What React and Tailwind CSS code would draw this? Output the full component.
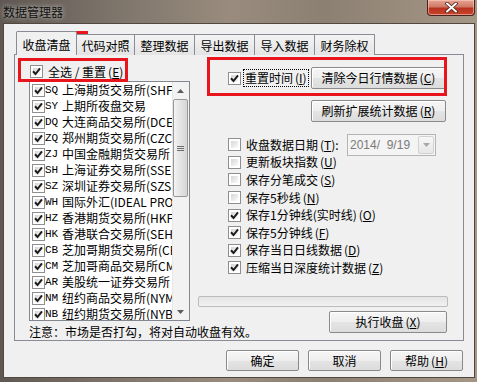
import { Fragment } from 'react'

const markets = [
  ['SQ', '上海期货交易所(SHFE)'],
  ['SY', '上期所夜盘交易'],
  ['DQ', '大连商品交易所(DCE)'],
  ['ZQ', '郑州期货交易所(CZCE)'],
  ['ZJ', '中国金融期货交易所'],
  ['SH', '上海证券交易所(SSE)'],
  ['SZ', '深圳证券交易所(SZSE)'],
  ['WH', '国际外汇(IDEAL PRO)'],
  ['HZ', '香港期货交易所(HKFE)'],
  ['HK', '香港联合交易所(SEHK)'],
  ['CB', '芝加哥期货交易所(CBOT)'],
  ['CM', '芝加哥商品交易所CME'],
  ['AR', '美股统一证券交易所'],
  ['NM', '纽约商品交易所(NYMEX)'],
  ['NB', '纽约期货交易所(NYBOT)'],
]

const options = [
  { label: '更新板块指数', hotkey: 'U', checked: false },
  { label: '保存分笔成交', hotkey: 'S', checked: false },
  { label: '保存5秒线', hotkey: 'N', checked: false },
  { label: '保存1分钟线(实时线)', hotkey: 'O', checked: true },
  { label: '保存5分钟线', hotkey: 'F', checked: true },
  { label: '保存当日日线数据', hotkey: 'D', checked: true },
  { label: '压缩当日深度统计数据', hotkey: 'Z', checked: true },
]

const tabs = [
  { label: '收盘清盘', width: 'w-[61px]', active: true },
  { label: '代码对照', width: 'w-[58px]' },
  { label: '整理数据', width: 'w-[60px]' },
  { label: '导出数据', width: 'w-[60px]' },
  { label: '导入数据', width: 'w-[60px]' },
  { label: '财务除权', width: 'w-[60px]' },
]

const buttonClass =
  'flex items-center justify-center rounded-[2px] border border-[#8a8a8a] bg-[linear-gradient(#f6f6f6_0%,#eeeeee_50%,#e4e4e4_51%,#dcdcdc_100%)] shadow-[inset_1px_1px_0_#ffffff] leading-[16px]'

function Check({ checked }) {
  return (
    <span className="relative flex h-[13px] w-[13px] shrink-0 items-center justify-center border border-[#8f8f8f] bg-white">
      <span className="absolute inset-[2px] bg-gradient-to-br from-[#d6d6d6] to-[#fbfbfb]" />
      {checked && (
        <svg className="relative" width="9" height="9" viewBox="0 0 9 9">
          <path d="M1 4.3 L3.5 7 L8 1.3" fill="none" stroke="#1c1c1c" strokeWidth="2" />
        </svg>
      )}
    </span>
  )
}

function Hotkey({ k }) {
  return (
    <span className="ml-[2px]">
      (<u>{k}</u>)
    </span>
  )
}

function Triangle({ up }) {
  return (
    <svg width="7" height="4" viewBox="0 0 7 4">
      <path d={up ? 'M0 4 L3.5 0 L7 4 Z' : 'M0 0 L3.5 4 L7 0 Z'} fill="#5c5c5c" />
    </svg>
  )
}

function MarketList() {
  return (
    <div className="mt-[1px] flex h-[240px] w-[161px] border border-[#828790] bg-white">
      <div className="flex w-[142px] flex-col overflow-hidden">
        {markets.map(([code, name]) => (
          <div key={code} className="flex h-[16px] shrink-0 items-center whitespace-nowrap pl-[2px]">
            <Check checked />
            <span className="w-[17px] shrink-0 font-['Liberation_Mono',monospace] text-[11px] leading-[16px]">{code}</span>
            <span className="leading-[16px]">{name}</span>
          </div>
        ))}
      </div>
      <div className="flex w-[17px] flex-col bg-[#f2f2f2] shadow-[inset_1px_0_0_#e6e6e6]">
        <div className="flex h-[17px] items-center justify-center">
          <Triangle up />
        </div>
        <div className="mx-[1px] flex h-[98px] items-center justify-center rounded-[2px] border border-[#979797] bg-[linear-gradient(90deg,#f3f3f3,#e3e3e3_50%,#d6d6d6)]">
          <div className="flex flex-col gap-[1px]">
            <span className="h-[1px] w-[7px] bg-[#6e6e6e]" />
            <span className="h-[1px] w-[7px] bg-[#6e6e6e]" />
            <span className="h-[1px] w-[7px] bg-[#6e6e6e]" />
          </div>
        </div>
        <div className="flex-1" />
        <div className="flex h-[17px] items-center justify-center">
          <Triangle />
        </div>
      </div>
    </div>
  )
}

function DateBox() {
  return (
    <div className="flex h-[22px] w-[89px] shrink-0 items-center border border-[#b5b5b5] bg-[#f4f4f4]">
      <span className="flex-1 pl-[2px] font-['Liberation_Sans',sans-serif] text-[12px] leading-[16px] text-[#7a7a7a]">
        2014/&nbsp;&nbsp;9/19
      </span>
      <span className="mr-[1px] flex h-[18px] w-[16px] items-center justify-center rounded-[2px] border border-[#d2d2d2] bg-gradient-to-b from-[#f7f7f7] to-[#e7e7e7]">
        <svg width="7" height="4" viewBox="0 0 7 4">
          <path d="M0 0 L3.5 4 L7 0 Z" fill="#a8a8a8" />
        </svg>
      </span>
    </div>
  )
}

function CloseButton() {
  return (
    <div className="mr-[2px] flex h-[16px] w-[48px] items-center justify-center rounded-b-[4px] border border-t-0 border-[#4a241c] bg-[linear-gradient(#e6a593_0%,#d07a67_45%,#b8331f_55%,#c9442c_100%)] shadow-[inset_0_0_0_1px_rgba(255,210,200,0.55)]">
      <svg width="13" height="11" viewBox="0 0 13 11">
        <path d="M2 1.5 L11 9.5 M11 1.5 L2 9.5" stroke="#4b1e17" strokeWidth="3.6" strokeLinecap="round" />
        <path d="M2 1.5 L11 9.5 M11 1.5 L2 9.5" stroke="#ffffff" strokeWidth="2" strokeLinecap="round" />
      </svg>
    </div>
  )
}

function App() {
  return (
    <div className="relative h-[382px] w-[477px] overflow-hidden bg-[linear-gradient(90deg,#5f5852_0%,#7b7269_22%,#998c7e_48%,#8c8073_68%,#a59786_100%)] font-['Noto_Sans_CJK_SC',sans-serif] text-[12px] text-black">
      <div className="flex h-[23px] items-start justify-between">
        <span className="ml-[3px] mt-[4px] leading-[16px] text-[#101010] [text-shadow:0_0_5px_rgba(255,255,255,0.75)]">数据管理器</span>
        <CloseButton />
      </div>

      <div className="ml-[3px] flex h-[355px] w-[472px] flex-col border border-[#51493f] bg-[#f0f0f0]">
        <div className="relative z-10 ml-[12px] mt-[7px] flex h-[24px] items-end">
          {tabs.map((tab) =>
            tab.active ? (
              <div
                key={tab.label}
                className={`${tab.width} flex h-[24px] items-center justify-center rounded-t-[2px] border border-b-0 border-[#898c95] bg-[#f0f0f0] pt-[3px] leading-[16px]`}
              >
                {tab.label}
              </div>
            ) : (
              <div
                key={tab.label}
                className={`${tab.width} flex h-[21px] items-center justify-center border-r border-t border-[#898c95] bg-gradient-to-b from-[#f4f4f4] to-[#e4e4e4] pt-[2px] leading-[16px]`}
              >
                {tab.label}
              </div>
            ),
          )}
        </div>

        <div className="ml-[10px] mt-[-1px] flex h-[287px] w-[450px] border border-[#898c95] bg-[#f0f0f0]">
          <div className="flex w-[176px] shrink-0 flex-col pl-[14px] pt-[8px]">
            <div className="flex h-[17px] items-center pl-[1px]">
              <Check checked />
              <span className="ml-[5px] leading-[16px]">
                全选 / 重置<Hotkey k="E" />
              </span>
            </div>
            <MarketList />
            <div className="mt-[3px] h-[16px] whitespace-nowrap leading-[16px]">注意：市场是否打勾，将对自动收盘有效。</div>
          </div>

          <div className="ml-[7px] flex w-[250px] flex-col pt-[12px]">
            <div className="flex h-[22px] w-[248px] items-center">
              <span className="ml-[30px]">
                <Check checked />
              </span>
              <span className="ml-[2px] h-[18px] border border-dotted border-black px-[1px] leading-[16px]">
                重置时间<Hotkey k="I" />
              </span>
              <button type="button" className={`${buttonClass} ml-auto h-[22px] w-[135px]`}>
                清除今日行情数据<Hotkey k="C" />
              </button>
            </div>

            <button type="button" className={`${buttonClass} ml-[113px] mt-[11px] h-[22px] w-[135px]`}>
              刷新扩展统计数据<Hotkey k="R" />
            </button>

            <div className="mt-[14px] flex flex-col">
              <div className="flex h-[17.6px] items-center pl-[30px]">
                <Check />
                <span className="ml-[5px] w-[101px] shrink-0 whitespace-nowrap leading-[16px]">
                  收盘数据日期<Hotkey k="T" />:
                </span>
                <DateBox />
              </div>
              {options.map((option) => (
                <Fragment key={option.hotkey}>
                  <div className="flex h-[17.6px] items-center pl-[30px]">
                    <Check checked={option.checked} />
                    <span className="ml-[5px] whitespace-nowrap leading-[16px]">
                      {option.label}
                      <Hotkey k={option.hotkey} />
                    </span>
                  </div>
                </Fragment>
              ))}
            </div>

            <div className="mt-[19px] h-[11px] w-[250px] rounded-[2px] border border-[#bcbcbc] bg-gradient-to-b from-[#e4e4e4] to-[#f2f2f2]" />

            <button type="button" className={`${buttonClass} ml-[131px] mt-[4px] h-[22px] w-[118px]`}>
              执行收盘<Hotkey k="X" />
            </button>
          </div>
        </div>

        <div className="mt-[9px] flex justify-end gap-[9px] pr-[11px]">
          <button type="button" className={`${buttonClass} h-[21px] w-[73px] border-[#3c3c3c] shadow-[inset_0_0_0_1px_#ffffff]`}>
            确定
          </button>
          <button type="button" className={`${buttonClass} h-[21px] w-[73px]`}>
            取消
          </button>
          <button type="button" className={`${buttonClass} h-[21px] w-[73px]`}>
            帮助<Hotkey k="H" />
          </button>
        </div>
      </div>

      <div className="pointer-events-none absolute left-[17px] top-[31px] h-[24px] w-[71px] border-[3px] border-[#e8161c]" />
      <div className="pointer-events-none absolute left-[18px] top-[58px] h-[24px] w-[110px] border-[3px] border-[#e8161c]" />
      <div className="pointer-events-none absolute left-[207px] top-[57px] h-[39px] w-[240px] border-[3px] border-[#e8161c]" />
    </div>
  )
}

export default App
